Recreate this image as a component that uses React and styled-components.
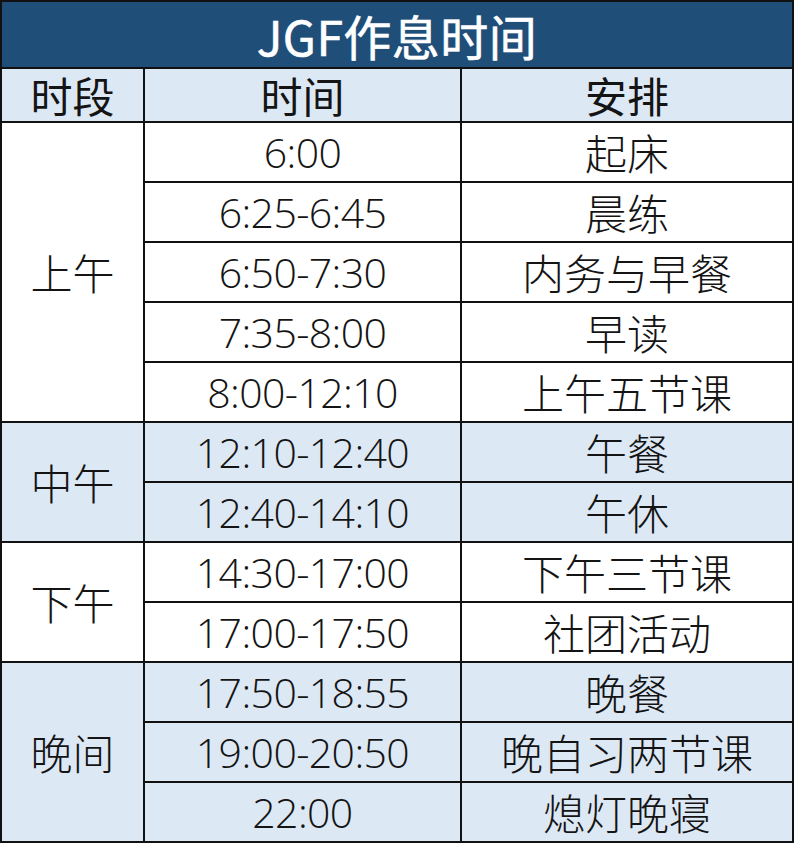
import React from "react";
import styled, { createGlobalStyle } from "styled-components";

const Global = createGlobalStyle`
  html, body { margin: 0; padding: 0; background: #ffffff; }
  body { font-family: "Noto Sans CJK SC", "Noto Sans", sans-serif; }
`;

const Table = styled.div`
  display: grid;
  grid-template-columns: 141px 315px 330px;
  grid-template-rows: 65px 52px repeat(12, 58px);
  gap: 2px;
  padding: 2px;
  width: 794px;
  box-sizing: border-box;
  background: #111111;
`;

const Title = styled.div`
  grid-column: 1 / -1;
  background: #1f4e79;
  color: #ffffff;
  display: flex;
  align-items: center;
  justify-content: center;
  font-size: 48px;
  font-weight: 400;
  line-height: 1;
  letter-spacing: 0.5px;
  -webkit-text-stroke: 0.6px #ffffff;
`;

const Cell = styled.div`
  display: flex;
  align-items: center;
  justify-content: center;
  background: ${(p) => (p.$tint ? "#dde8f5" : "#ffffff")};
  color: #141414;
  font-size: 42px;
  font-weight: ${(p) => (p.$head ? 400 : 300)};
  line-height: 1;
  white-space: nowrap;
  ${(p) => (p.$span ? `grid-row: span ${p.$span};` : "")}
`;

const Num = styled.span`
  font-family: "Open Sans", "Noto Sans", sans-serif;
  font-weight: 300;
  font-size: 41px;
  letter-spacing: -0.6px;
`;

const groups = [
  {
    name: "上午",
    tint: false,
    rows: [
      ["6:00", "起床"],
      ["6:25-6:45", "晨练"],
      ["6:50-7:30", "内务与早餐"],
      ["7:35-8:00", "早读"],
      ["8:00-12:10", "上午五节课"],
    ],
  },
  {
    name: "中午",
    tint: true,
    rows: [
      ["12:10-12:40", "午餐"],
      ["12:40-14:10", "午休"],
    ],
  },
  {
    name: "下午",
    tint: false,
    rows: [
      ["14:30-17:00", "下午三节课"],
      ["17:00-17:50", "社团活动"],
    ],
  },
  {
    name: "晚间",
    tint: true,
    rows: [
      ["17:50-18:55", "晚餐"],
      ["19:00-20:50", "晚自习两节课"],
      ["22:00", "熄灯晚寝"],
    ],
  },
];

export default function App() {
  return (
    <>
      <Global />
      <Table>
        <Title>JGF作息时间</Title>
        <Cell $tint $head>时段</Cell>
        <Cell $tint $head>时间</Cell>
        <Cell $tint $head>安排</Cell>
        {groups.map((g) => (
          <React.Fragment key={g.name}>
            <Cell $tint={g.tint} $span={g.rows.length}>{g.name}</Cell>
            {g.rows.map(([t, a]) => (
              <React.Fragment key={t}>
                <Cell $tint={g.tint}><Num>{t}</Num></Cell>
                <Cell $tint={g.tint}>{a}</Cell>
              </React.Fragment>
            ))}
          </React.Fragment>
        ))}
      </Table>
    </>
  );
}
